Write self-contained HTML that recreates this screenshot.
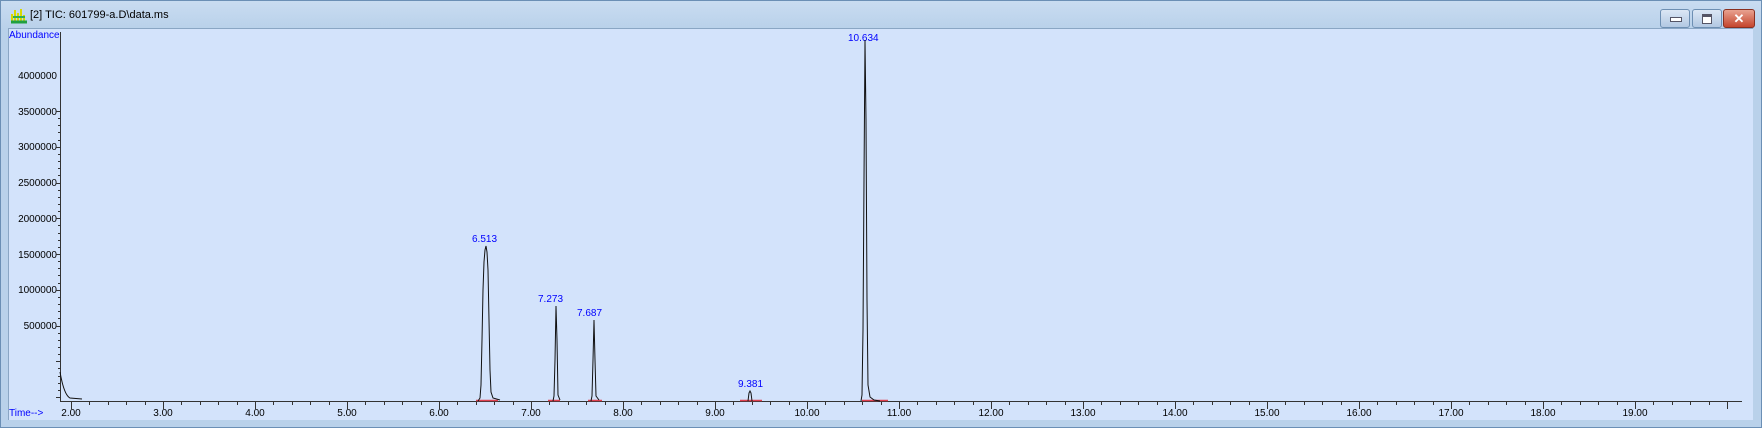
<!DOCTYPE html>
<html><head><meta charset="utf-8"><style>
body{margin:0;width:1762px;height:428px;overflow:hidden;background:#b9d1ea;font-family:"Liberation Sans",sans-serif}
.win{position:absolute;left:0;top:0;width:1760px;height:426px;border:1px solid #6b8fb5;background:linear-gradient(#c9dcf1,#b9d1ea 28px);}
.title{position:absolute;left:29px;top:8px;font-size:11px;color:#000}
.btn{position:absolute;top:8px;height:17px;border:1px solid #6d8fb3;border-radius:3px;background:linear-gradient(#dbe7f5,#b2c8e2)}
.plot{position:absolute;left:8px;top:28px;width:1744px;height:391px;background:#d3e3fb;border-top:1px solid #8aa6c4;border-left:1px solid #8aa6c4}
svg text{font-family:"Liberation Sans",sans-serif;font-size:10px}
</style></head><body>
<div class="win">
<svg style="position:absolute;left:9px;top:6px" width="18" height="18" viewBox="0 0 18 18"><path d="M2 14V7M5 14V3M8 14V6M11 14V2M14 14V8" stroke="#d8d800" stroke-width="2"/><path d="M1 15h16" stroke="#20a040" stroke-width="3"/><path d="M3 10h12" stroke="#30b050" stroke-width="2"/></svg>
<div class="title">[2] TIC: 601799-a.D\data.ms</div>
<div class="btn" style="left:1659px;width:28px"><div style="position:absolute;left:9px;top:7px;width:10px;height:3px;background:#fff;border:1px solid #556"></div></div>
<div class="btn" style="left:1691px;width:28px"><div style="position:absolute;left:9px;top:4px;width:8px;height:6px;border:1px solid #556;border-top-width:3px;background:#fff"></div></div>
<div class="btn" style="left:1722px;width:30px;background:linear-gradient(#e8a290,#c5452d);border-color:#8a3020;color:#fff;font-weight:bold;font-size:13px;text-align:center;line-height:17px">✕</div>
</div>
<div class="plot"></div>
<svg id="s" style="position:absolute;left:0;top:0" width="1762" height="428">
<g fill="#0000ff">
<text x="9" y="38">Abundance</text>
<text x="9" y="416">Time--&gt;</text>
<text x="472" y="242">6.513</text>
<text x="538" y="302">7.273</text>
<text x="577" y="316">7.687</text>
<text x="738" y="387">9.381</text>
<text x="848" y="41">10.634</text>
</g>
<g fill="#000" text-anchor="end">
<text x="57" y="79">4000000</text><text x="57" y="115">3500000</text><text x="57" y="150">3000000</text><text x="57" y="186">2500000</text><text x="57" y="222">2000000</text><text x="57" y="258">1500000</text><text x="57" y="293">1000000</text><text x="57" y="329">500000</text>
</g>
<g fill="#000" text-anchor="middle">
<text x="71" y="416">2.00</text><text x="163" y="416">3.00</text><text x="255" y="416">4.00</text><text x="347" y="416">5.00</text><text x="439" y="416">6.00</text><text x="531" y="416">7.00</text><text x="623" y="416">8.00</text><text x="715" y="416">9.00</text><text x="807" y="416">10.00</text><text x="899" y="416">11.00</text><text x="991" y="416">12.00</text><text x="1083" y="416">13.00</text><text x="1175" y="416">14.00</text><text x="1267" y="416">15.00</text><text x="1359" y="416">16.00</text><text x="1451" y="416">17.00</text><text x="1543" y="416">18.00</text><text x="1635" y="416">19.00</text>
</g>
<g id="ax" stroke="#333" stroke-width="1" fill="none">
<path d="M60.5 32V401.5H1742"/>
</g>
<g stroke="#e04050" stroke-width="1.5">
<path d="M476 400.5h22M548 400.5h12M588 400.5h14M740 400.5h22M862 400.5h26"/>
</g>
<g stroke="#111" stroke-width="1" fill="none">
<path d="M60 372 Q64 395 70 398 L82 399"/>
<path d="M478 401 L480 398 L481 385 L482 340 L483 290 L484 262 L485 250 L486 246 L487 252 L488 270 L489 320 L490 370 L491 392 L493 398 L500 400"/>
<path d="M553 401 L554 396 L555 360 L556 306 L557 340 L558 395 L560 400"/>
<path d="M591 401 L592 396 L593 360 L594 320 L595 360 L596 396 L599 400"/>
<path d="M748 401 L749 393 L750 391 L751 393 L752 401"/>
<path d="M861 401 L862 395 L863 330 L864 180 L865 40 L866 120 L867 300 L868 385 L870 397 L874 400 L880 401"/>
</g>
</svg>
<script>
var g=document.getElementById('ax'),d='';
for(var i=0;i<=90;i++){var x=Math.round(71+i*18.4)+.5;if(x>1742)break;d+='M'+x+' 401V'+(i%5==0?409:405);}
for(var j=0;j<=40;j++){var y=Math.round(397-j*7.15)+.5;if(y<34)break;d+='M'+(j%5==0?56:58)+' '+y+'H60';}
var p=document.createElementNS('http://www.w3.org/2000/svg','path');p.setAttribute('d',d);g.appendChild(p);
</script>
</body></html>
